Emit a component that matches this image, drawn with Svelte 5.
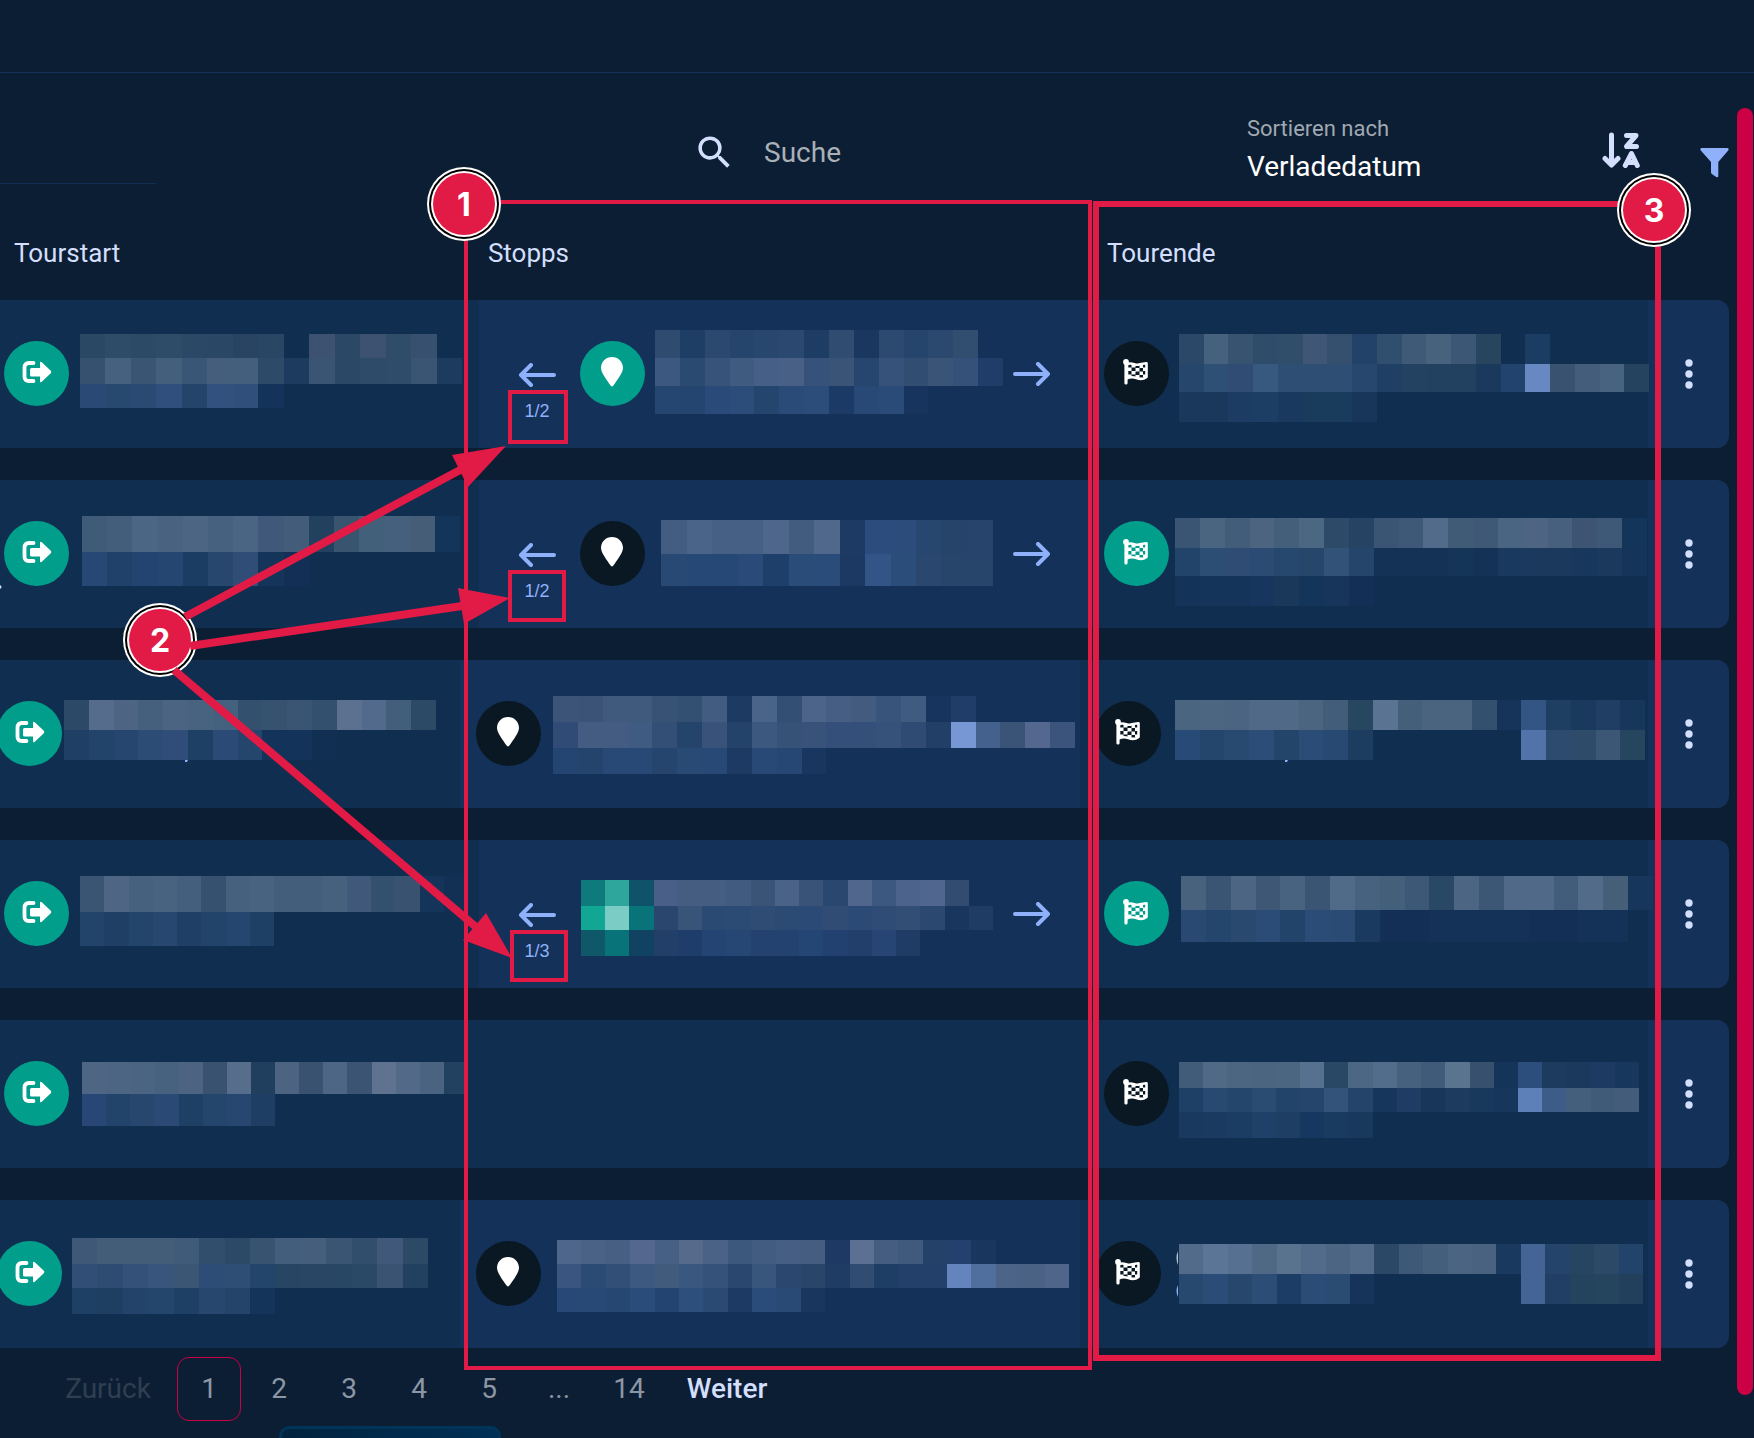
<script>
	let search = $state("");
	let sortBy = $state("Verladedatum");
	let page = $state(1);

	const pages = [1, 2, 3, 4, 5, "...", 14];

	// mosaic: x/y inside the cell, w = width of the block, h = row heights, rows = one colour per tile
	const tours = [
		{
			start: {
				mosaic: {
					x: 80, y: 34, w: 382, n: 15, h: [24, 26, 24],
					rows: [
						"2a4764 2e4b68 2c4a66 2e4c68 2b4967 2a4866 284462 2a4665 - 3c5270 2b4866 3c5270 2f4c69 38506f -",
						"35516f 466180 3a5473 435f7c 3a5676 445e7c 445e7e 2d4a69 1c3b5e 3a5473 2b4866 2e4b6a 2f4c6a 3a5473 1c3b5f",
						"2a4a75 27486f 2a4a74 314f7d 24446a 33517e 314f7b 14335a",
					],
				},
			},
			stop: {
				count: "1/2",
				done: true,
				mosaic: {
					x: 195, y: 30, w: 348, n: 14, h: [28, 28, 28],
					rows: [
						"304b70 1f3e66 2b496f 26456c 28476d 2b4970 1e3d65 304c71 19375f 2c496f 26456c 2b496e 314d70 -",
						"3d5880 2b4a72 375379 405b80 465f86 485f86 36527a 3a5478 27466f 36527a 314d72 3a5478 35517a 1e3d68",
						"264672 244570 2a4b79 2c4d7a 24456e 2a4a78 2c4c7a 1c3a66 284876 2a4a78 17345f",
					],
				},
			},
			end: {
				done: false,
				mosaic: {
					x: 88, y: 34, w: 470, n: 19, h: [30, 28, 30],
					rows: [
						"2b4868 46617e 375370 2f4c6b 304d6a 3f5676 34506e 22426a 304e6d 3e5a76 46627d 3c5676 27455f - 1c3d63",
						"26466b 2f5075 304c74 38597f 2e4e74 2f4e74 2f4e74 28476e 203f64 234261 224161 224160 1a395d 22436d 6888c2 38526f 435d7a 48637f 25435f",
						"19385c 19385c 1c3c63 1c3d64 19395f 193b5c 1a3c5c 17365a",
					],
				},
			},
		},
		{
			start: {
				mosaic: {
					x: 82, y: 36, w: 378, n: 15, h: [36, 34],
					rows: [
						"405b78 425e7b 4b6684 48627f 4b6583 46617f 4a6584 40597a 425c7a 22415f 38546f 42607a 45607c 465d78 14355a",
						"274774 20426a 234470 264672 1b3d63 27476f 304d78 15345a 132f55",
					],
				},
			},
			stop: {
				count: "1/2",
				done: false,
				mosaic: {
					x: 201, y: 40, w: 332, n: 13, h: [34, 32],
					rows: [
						"425c82 4a6388 465f84 465f84 4e668c 425c80 50688c 1c3a64 2b4c7c 2c4d7c 284770 264469 27456c",
						"284974 264876 264876 2a4b7a 1e3f6a 2a4c79 2a4c7a 1b3963 325486 2b4d7a 2a486f 27456a 27456b",
					],
				},
			},
			end: {
				done: true,
				mosaic: {
					x: 84, y: 38, w: 472, n: 19, h: [30, 28, 30],
					rows: [
						"3a5474 4a6580 425d79 4c6480 435f7a 4b6782 2d4b69 254464 3a5474 3e5877 536b8a 405b76 3e5876 4a6582 4d6583 47607d 3d5573 3e5877 14355a",
						"22446a 2c4d74 2f4d74 2c4b74 26486f 27476a 335278 25456a 133256 133256 133256 143558 133256 1a395e 1a395c 1a395c 17375c 1a395c 14345a",
						"143359 143559 14345a 17365f 19385a 14355a 17345a 132f55",
					],
				},
			},
		},
		{
			tight: true,
			start: {
				mosaic: {
					x: 64, y: 40, w: 372, n: 15, h: [30, 30],
					rows: [
						"2c4a68 566c8c 4d6583 45607d 4a6482 48637f 456180 34506f 37526f 3a5474 33506f 5c7090 526a8b 435e7a 2c4965",
						"1f4064 22436a 27466f 2c4b75 2f4d78 1f4065 2b4b76 24456c 14335a 14335a 112f53",
					],
				},
			},
			stop: {
				done: false,
				mosaic: {
					x: 93, y: 36, w: 522, n: 21, h: [26, 26, 26],
					rows: [
						"3c5478 3a5376 405a7e 405a7e 385275 335072 425b80 1c3a62 4a6388 335074 4c648a 465d84 425b7e 38547a 405a80 17345f 1f3d68",
						"304c76 445b82 445b82 405b82 344f76 24446c 38527a 24436b 3c587f 365277 38527a 34507a 34507a 36527a 304a74 223f68 7696d4 44608c 3a5478 54688f 3a547c",
						"244472 24446e 284876 284876 25456f 2a4a76 284876 1c3a64 284876 264674 18365f",
					],
				},
			},
			end: {
				done: false,
				mosaic: {
					x: 84, y: 40, w: 470, n: 19, h: [30, 30],
					rows: [
						"4a6580 4c6682 4a6482 506986 506986 4b6581 425d79 27465f 5a7392 445f7a 4a637f 4a647f 34506f 16345a 335583 1e3e62 193a5c 203e64 17375a",
						"284a76 25466c 284970 2c4d78 24456a 2b4c76 274972 1c3c60 - - - - - - 5273aa 2c4b6f 2e4c69 3c5676 26455f",
					],
				},
			},
		},
		{
			start: {
				mosaic: {
					x: 80, y: 36, w: 388, n: 16, h: [36, 34],
					rows: [
						"3a5473 4e6583 45617e 48637f 435f7d 36506f 46617e 48637f 435e7a 435e7a 45617d 40597a 34506f 38526f 14345a 113054",
						"22436a 1f4064 24456b 274770 1f4064 22446b 25466f 1f4065",
					],
				},
			},
			stop: {
				count: "1/3",
				covered: true,
				mosaic: {
					x: 121, y: 40, w: 412, n: 17, h: [26, 24, 26],
					rows: [
						"0f7a7c 2ea69c 10526a 4a5f88 465d82 465d82 405a80 3a5478 4a6188 385278 29476f 50668c 3c5780 4c648c 50668e 314c70 -",
						"12a695 7accc4 08747a 2a466f 385579 2a4a74 2c4b74 2e4c74 2c4b74 2b4a75 304c74 2b4a75 2f4c76 324e75 2a4870 19365f 1f3c65",
						"0e586a 08747a 124262 223f6a 1f3d6a 244574 264674 24426f 234270 244674 224070 213f6a 264474 1e3c66",
					],
				},
			},
			end: {
				done: true,
				mosaic: {
					x: 90, y: 36, w: 472, n: 19, h: [34, 32],
					rows: [
						"48627e 3a5473 4c6582 3d5775 48637f 3a5474 506b88 46627e 435f7a 3d5777 294866 4b6582 3c5676 506988 506988 425c7c 526b89 455f79 17365c",
						"294972 25466c 29496f 2b4c76 22446a 2b4c76 2a4b74 1a3a5f 132f55 132f55 143257 143257 143257 143257 132f55 132f55 143257 143257",
					],
				},
			},
		},
		{
			start: {
				mosaic: {
					x: 82, y: 42, w: 386, n: 16, h: [32, 32],
					rows: [
						"4e6583 4c6582 4b6481 47627e 4c6481 38526f 566d8b 203f5e 4c6482 38526f 4e6685 3c5474 5f7391 526a88 4a6380 22405f",
						"284776 22436a 27476f 2a4a75 1f4065 24456c 274770 1e3e63",
					],
				},
			},
			stop: null,
			end: {
				done: false,
				mosaic: {
					x: 88, y: 42, w: 460, n: 19, h: [26, 24, 26],
					rows: [
						"405c78 4f6987 4c6682 4b6580 4b6681 567090 294865 4c6783 526c8c 46617e 405b79 5a7490 36506e 14345a 2c4e7c 1c3b5f 1a395c 1c3a62 17375c",
						"1f4066 284a72 25466c 294b74 22446a 25466a 33537b 24446a 17365c 1f3c64 17365a 1c3b5f 19395c 17365c 5e80b8 3d5c88 435f7c 405b78 425c7a",
						"19395f 1a3b5f 1c3d63 1f4068 1e3e64 16375f 1a3b60 19395c",
					],
				},
			},
		},
		{
			tight: true,
			start: {
				mosaic: {
					x: 72, y: 38, w: 356, n: 14, h: [26, 24, 26],
					rows: [
						"405877 435d79 435d79 435d79 405a79 314e6d 2c4968 37536f 435d7c 445e7c 3a5474 314e6c 40587a 2c4966",
						"314f76 2e4b72 34517a 38557c 3a5674 2e4d76 2f4e76 23456b 264664 294764 284764 294966 3a5373 22405f",
						"1f4065 1e3f62 23436a 24456c 1f4065 27476f 24446a 14345a",
					],
				},
			},
			stop: {
				done: false,
				mosaic: {
					x: 97, y: 40, w: 512, n: 21, h: [24, 24, 24],
					rows: [
						"4e658c 4a6286 465f82 54678f 465f84 566b8c 4a6286 3c587c 425b80 465d84 465d82 1e3a64 5c7094 465d82 405a7e 244269 22416f 19365f",
						"3a5680 2c4b74 324f78 3c5980 405b7c 3a5780 34527a 2a476f 38557c 2b476f 29466a 1f3c64 304c70 1f3e66 22406a 22406a 6484be 506f9e 4c6488 4a6284 4f668a",
						"284878 284876 264772 2a4c7a 234470 2c4f7c 2a4a74 1c3a64 2a4c7a 2a4a76 19365f",
					],
				},
			},
			end: {
				done: false,
				mosaic: {
					x: 88, y: 44, w: 464, n: 19, h: [30, 30],
					rows: [
						"526b8a 5a7595 557090 4e6886 59738f 526b8a 4c6583 526b8a 2b4966 3e5878 435f7c 4a6482 48627f 19395f 456496 24446c 254560 2c4a68 22436a",
						"28496f 2b4c76 27486c 2b4d76 1c3e66 2b4c76 2a4b72 16345a - - - - - - 456496 213f64 24435f 25455f 223f5c",
					],
				},
			},
		},
	];

	const frames = [
		{ x: 466, y: 202, w: 624, h: 1166, line: 4 },
		{ x: 1096, y: 204, w: 562, h: 1154, line: 6 },
		{ x: 510, y: 392, w: 56, h: 50, line: 4 },
		{ x: 510, y: 572, w: 54, h: 48, line: 4 },
		{ x: 512, y: 932, w: 54, h: 48, line: 4 },
	];

	const badges = [
		{ n: 1, x: 464, y: 204 },
		{ n: 2, x: 160, y: 640 },
		{ n: 3, x: 1654, y: 210 },
	];

	const arrows = [
		{ line: "M185 617L462 469", head: "506,446 452,455 468,487" },
		{ line: "M190 646L462 606", head: "510,598 458,588 464,624" },
		{ line: "M174 670L476 927", head: "512,958 486,913 463,940" },
	];

	// top edge of every tile row
	function tops(heights) {
		let sum = 0;
		return heights.map((h) => (sum += h) - h);
	}
</script>

{#snippet mosaic(m)}
	{@const ys = tops(m.h)}
	<svg
		class="mosaic"
		aria-hidden="true"
		width={m.w}
		height={m.h.reduce((a, b) => a + b)}
		style="left: {m.x}px; top: {m.y}px"
	>
		{#each m.rows as row, r}
			{#each row.split(" ") as color, c}
				{#if color !== "-"}
					<rect
						x={Math.round((c * m.w) / m.n)}
						y={ys[r]}
						width={Math.round(((c + 1) * m.w) / m.n) - Math.round((c * m.w) / m.n)}
						height={m.h[r]}
						fill="#{color}"
					/>
				{/if}
			{/each}
		{/each}
	</svg>
{/snippet}

{#snippet exitIcon()}
	<span class="dot done">
		<svg width="30" height="24" viewBox="0 0 30 24">
			<path d="M11.500 3H7Q2.500 3 2.500 7.500V16.500Q2.500 21 7 21H11.500" fill="none" stroke="#fff" stroke-width="3.800" stroke-linecap="round" />
			<path d="M9.500 8H18V3Q18 .8 19.800 2.200L28.800 10.800Q29.900 12 28.800 13.200L19.800 21.800Q18 23.200 18 21V16.500H9.500Q8 16.500 8 15V9.500Q8 8 9.500 8Z" fill="#fff" />
		</svg>
	</span>
{/snippet}

{#snippet pinIcon(done)}
	<span class="dot" class:done>
		<svg width="22" height="30" viewBox="0 0 22 30">
			<path d="M11 0C4.800 0 0 4.800 0 11C0 15.500 6 23.500 9.800 28.700Q11 30.200 12.200 28.700C16 23.500 22 15.500 22 11C22 4.800 17.200 0 11 0Z" fill="#fff" />
		</svg>
	</span>
{/snippet}

{#snippet flagIcon(done)}
	<span class="dot" class:done>
		<svg width="26" height="26" viewBox="0 0 26 26">
			<circle cx="3" cy="3" r="2.900" fill="#fff" />
			<path d="M3 3V24" stroke="#fff" stroke-width="3.200" stroke-linecap="round" />
			<path d="M4 5.200C9 3 12 6.600 16 5.600C19 5 21 4.200 23.500 4.200V18C20 20.600 17 20.400 13.500 19C10 17.800 7 18 4 19.200Z" fill="none" stroke="#fff" stroke-width="2.600" stroke-linejoin="round" />
			<path d="M8.500 5H12.500V8.500H8.500ZM16.500 6H20V9H16.500ZM5 8.500H8.500V12H5ZM12.500 9H16.500V12.500H12.500ZM20 8.500H23V12H20ZM8.500 12H12.500V15.500H8.500ZM16.500 12.500H20V16H16.500ZM5 15.500H8.500V18H5ZM12.500 16H16.500V19H12.500ZM20 15.500H23V18H20Z" fill="#fff" />
		</svg>
	</span>
{/snippet}

<div class="page">
	<header class="topbar"></header>

	<div class="toolbar">
		<div class="field-line"></div>
		<div class="search">
			<svg width="43" height="43" viewBox="0 0 24 24" aria-hidden="true">
				<path d="M15.500 14h-.79l-.28-.27A6.471 6.471 0 0 0 16 9.500 6.500 6.500 0 1 0 9.500 16c1.610 0 3.090-.59 4.230-1.570l.27.28v.79l5 4.990L20.490 19l-4.990-5zm-6 0C7.010 14 5 11.990 5 9.500S7.010 5 9.500 5 14 7.010 14 9.500 11.990 14 9.500 14z" fill="#d3dffc" />
			</svg>
			<input type="search" placeholder="Suche" aria-label="Suche" bind:value={search} />
		</div>
		<div class="sort">
			<label for="sort">Sortieren nach</label>
			<select id="sort" bind:value={sortBy}>
				<option>Verladedatum</option>
			</select>
		</div>
		<div class="tools">
			<button aria-label="Sortierung umkehren">
				<svg width="38" height="36" viewBox="0 0 38 36" fill="none" stroke="#d3dffc" stroke-width="5" stroke-linecap="round" stroke-linejoin="round">
					<path d="M9.500 3V32M3 26.500L9.500 33L16 26.500" />
					<path d="M24.500 3.500H34L24.500 14.500H34.500" />
					<path d="M23.300 33.500L29.500 21.500L35.300 33.500M26 30.500H33" />
				</svg>
			</button>
			<button class="filter" aria-label="Filter">
				<svg width="29" height="30" viewBox="0 0 29 30">
					<path d="M1.500 0H27.500Q29.500 .8 28.200 2.600L18.300 14V28Q18.200 30 16.200 29L11.800 26Q11 25.300 11 24V14L.8 2.600Q-.5 .8 1.500 0Z" fill="#8fb0fb" />
				</svg>
			</button>
		</div>
	</div>

	<table>
		<thead>
			<tr>
				<th class="col-start">Tourstart</th>
				<th class="col-stops">Stopps</th>
				<th class="col-end">Tourende</th>
				<th class="col-menu"></th>
			</tr>
		</thead>
		<tbody>
			{#each tours as tour}
				<tr class:tight={tour.tight}>
					<td>
						<div class="place from">{@render exitIcon()}</div>
						{@render mosaic(tour.start.mosaic)}
					</td>
					<td>
						{#if tour.stop}
							<div class="stops" class:paged={tour.stop.count}>
								{#if tour.stop.count}
									<div class="step">
										<button aria-label="Vorheriger Stopp">
											<svg width="38" height="24" viewBox="0 0 38 24" fill="none" stroke="#8fb0fb" stroke-width="4" stroke-linecap="round" stroke-linejoin="round">
												<path d="M36 12H3M13 2L3 12L13 22" />
											</svg>
										</button>
										<span>{tour.stop.count}</span>
									</div>
								{/if}
								{#if !tour.stop.covered}
									{@render pinIcon(tour.stop.done)}
								{/if}
								{#if tour.stop.count}
									<button class="next" aria-label="Nächster Stopp">
										<svg width="38" height="24" viewBox="0 0 38 24" fill="none" stroke="#8fb0fb" stroke-width="4" stroke-linecap="round" stroke-linejoin="round">
											<path d="M2 12H35M25 2L35 12L25 22" />
										</svg>
									</button>
								{/if}
							</div>
							{@render mosaic(tour.stop.mosaic)}
						{/if}
					</td>
					<td>
						<div class="place to">{@render flagIcon(tour.end.done)}</div>
						{@render mosaic(tour.end.mosaic)}
					</td>
					<td class="menu">
						<button aria-label="Menü">
							<svg width="8" height="30" viewBox="0 0 8 30" fill="#d3dffc">
								<circle cx="4" cy="4" r="3.700" />
								<circle cx="4" cy="15" r="3.700" />
								<circle cx="4" cy="26" r="3.700" />
							</svg>
						</button>
					</td>
				</tr>
			{/each}
		</tbody>
	</table>

	<nav>
		<button class="wide" disabled>Zurück</button>
		{#each pages as p}
			{#if p === "..."}
				<span>...</span>
			{:else}
				<button class:active={p === page} onclick={() => (page = p)}>{p}</button>
			{/if}
		{/each}
		<button class="wide forward">Weiter</button>
	</nav>

	<div class="drawer"></div>

	<div class="scrollbar"></div>

	<svg class="notes" aria-hidden="true">
		<path d="M185 760h3l-1 2h-2zM1285 760h3l-1 2h-2z" fill="#8fb0fb" />
		<path d="M0 585q3 2 0 4z" fill="#d3dffc" />
		<path d="M1178 1251q-3 7 0 14z" fill="#b9c4d6" />
		<path d="M1178 1285q-3 6 0 12z" fill="#8fb0fb" />
		{#each frames as f}
			<rect x={f.x} y={f.y} width={f.w} height={f.h} fill="none" stroke="#e11a46" stroke-width={f.line} />
		{/each}
		{#each badges as b}
			<circle cx={b.x} cy={b.y} r="37" fill="#fff" />
			<circle cx={b.x} cy={b.y} r="35" fill="#000" />
			<circle cx={b.x} cy={b.y} r="33" fill="#fff" />
			<circle cx={b.x} cy={b.y} r="31" fill="#e11a46" />
			<text x={b.x} y={b.y + 12} text-anchor="middle">{b.n}</text>
		{/each}
		{#each arrows as a}
			<path d={a.line} stroke="#e11a46" stroke-width="8" />
			<polygon points={a.head} fill="#e11a46" />
		{/each}
	</svg>
</div>

<style>
	:global(body) {
		margin: 0;
		background-color: #0c1e33;
		font-family: Roboto, "Liberation Sans", sans-serif;
		color: #d3dffc;
	}

	* {
		box-sizing: border-box;
	}

	button,
	input,
	select {
		padding: 0;
		border: none;
		background: none;
		font: inherit;
		color: inherit;
	}

	button {
		cursor: pointer;
	}

	svg {
		display: block;
	}

	.page {
		position: relative;
		height: 100vh;
		overflow: hidden;
	}

	.topbar {
		height: 73px;
		border-bottom: 1px solid #14315a;
	}

	.toolbar {
		display: grid;
		grid-template-columns: 693fr 554fr 349fr 158px;
		height: 131px;
		padding-top: 41px;
	}

	.field-line {
		width: 156px;
		height: 70px;
		border-bottom: 1px solid #122d52;
	}

	.search {
		display: flex;
		align-items: center;
		gap: 28px;
		height: 76px;
	}

	.search input {
		flex: 1;
		min-width: 0;
		height: 36px;
		font-size: 28px;
		outline: none;
	}

	.search input::placeholder {
		color: #a9b0b8;
		opacity: 1;
	}

	.sort {
		display: flex;
		flex-direction: column;
		gap: 4px;
	}

	.sort label {
		font-size: 22px;
		line-height: 30px;
		color: #a0a8b2;
	}

	.sort select {
		appearance: none;
		height: 36px;
		font-size: 28px;
		color: #fff;
	}

	.tools {
		display: flex;
		align-items: center;
		gap: 60px;
		height: 72px;
		padding-left: 6px;
	}

	.filter {
		padding-top: 26px;
	}

	table {
		width: calc(100% - 25px);
		table-layout: fixed;
		border-collapse: separate;
		border-spacing: 0 32px;
	}

	th {
		height: 32px;
		padding: 0;
		font-size: 26px;
		font-weight: 400;
		line-height: 30px;
		text-align: left;
		vertical-align: bottom;
	}

	.col-start {
		width: 26.6%;
		padding-left: 14px;
	}

	.col-stops {
		width: 36.5%;
		padding-left: 28px;
	}

	.col-end {
		padding-left: 16px;
	}

	.col-menu {
		width: 81px;
	}

	td {
		position: relative;
		height: 148px;
		padding: 0;
		background-color: #102e50;
	}

	td.menu {
		border-radius: 0 12px 12px 0;
		background-color: #14315a;
	}

	.menu button {
		display: flex;
		justify-content: center;
		width: 100%;
	}

	.place,
	.stops {
		display: flex;
		align-items: center;
		height: 148px;
	}

	.from {
		padding-left: 4px;
	}

	.to {
		padding-left: 13px;
	}

	.stops {
		margin-right: 11px;
		padding-left: 16px;
		background-color: #14315a;
	}

	.stops.paged {
		gap: 24px;
		margin: 0 0 0 19px;
		padding: 0 40px 0 39px;
	}

	.tight .from {
		margin-left: -7px;
	}

	.tight .to {
		padding-left: 5px;
	}

	.dot {
		display: flex;
		align-items: center;
		justify-content: center;
		flex: none;
		width: 65px;
		height: 65px;
		margin-bottom: 2px;
		padding-bottom: 3px;
		border-radius: 50%;
		background-color: #0a1823;
	}

	.dot.done {
		background-color: #029e8c;
	}

	.step {
		display: flex;
		flex-direction: column;
		align-items: center;
		gap: 12px;
		padding-top: 37px;
		font-family: "Liberation Sans", sans-serif;
		font-size: 18px;
		line-height: 24px;
		color: #8fb0fb;
	}

	.next {
		margin-left: auto;
	}

	.mosaic {
		position: absolute;
		z-index: 1;
		shape-rendering: crispEdges;
	}

	nav {
		display: flex;
		align-items: center;
		gap: 6px;
		margin-top: -23px;
		padding-left: 45px;
		font-size: 28px;
		color: #8c97a5;
	}

	nav button,
	nav span {
		width: 64px;
		height: 64px;
		line-height: 64px;
		text-align: center;
	}

	nav .active {
		border: 1px solid #cb0045;
		border-radius: 12px;
		line-height: 62px;
	}

	nav .wide {
		width: 120px;
	}

	nav .wide:disabled {
		width: 126px;
		color: #2f3e51;
	}

	nav .forward {
		font-weight: 500;
		color: #d3dffc;
	}

	.drawer {
		width: 222px;
		height: 64px;
		margin: 5px 0 0 279px;
		border: 3px solid #003459;
		border-radius: 10px;
		background: linear-gradient(to right, #02233f, #003056);
	}

	.scrollbar {
		position: absolute;
		top: 108px;
		right: 1px;
		bottom: 43px;
		width: 16px;
		border-radius: 8px;
		background-color: #cb0045;
	}

	.notes {
		position: absolute;
		z-index: 2;
		top: 0;
		left: 0;
		width: 100%;
		height: 100%;
		pointer-events: none;
	}

	.notes text {
		font-family: Inter, sans-serif;
		font-size: 32px;
		font-weight: 700;
		fill: #fff;
	}
</style>
